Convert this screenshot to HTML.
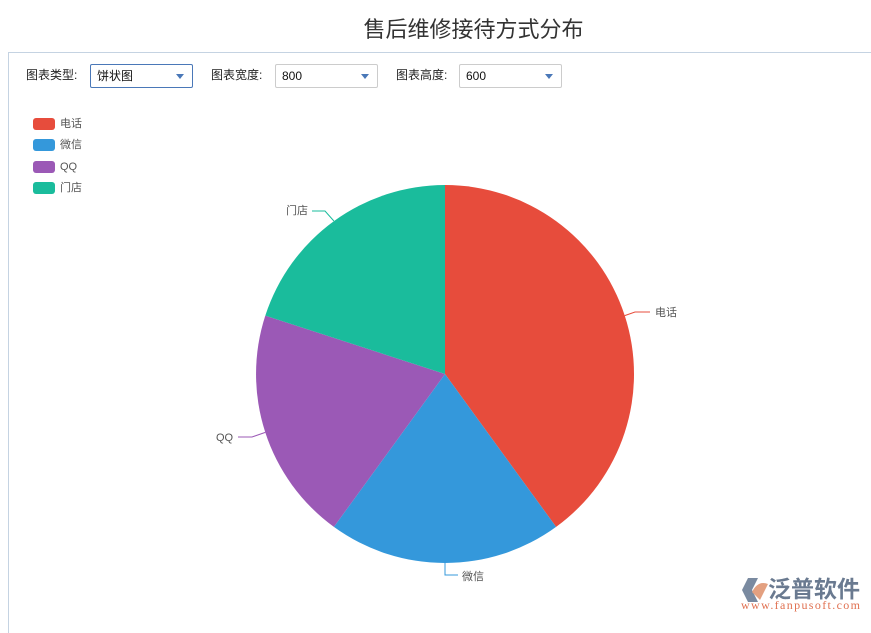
<!DOCTYPE html><html><head><meta charset="utf-8"><style>
body{margin:0;width:871px;height:621px;background:#fff;font-family:"Liberation Sans","Noto Sans CJK SC",sans-serif;position:relative;overflow:hidden}
.t{position:absolute;top:12px;left:0;width:871px;text-align:center;font-size:22px;color:#333;padding-left:76px;box-sizing:border-box}
.panel{position:absolute;left:8px;top:52px;width:870px;height:580px;border-left:1px solid #c5d3e2;border-top:1px solid #c5d3e2}
.lb{position:absolute;top:68px;font-size:12px;color:#222;line-height:14px}
.sel{position:absolute;top:64px;height:24px;border:1px solid #ccc;border-radius:2px;font-size:12px;line-height:22px;padding-left:6px;box-sizing:border-box;color:#111}
.sel:after{content:"";position:absolute;right:8px;top:9px;border:4px solid transparent;border-top:5px solid #4a78b8}
.lg{position:absolute;left:33px;font-size:11px;color:#555;height:14px;line-height:14px}
.lg i{display:inline-block;width:22px;height:12px;border-radius:3px;vertical-align:top;margin-top:1px;margin-right:5px}
</style></head><body>
<div class="t">售后维修接待方式分布</div>
<div class="panel"></div>
<div class="lb" style="left:26px">图表类型:</div>
<div class="sel" style="left:90px;width:103px;border-color:#4a78b8">饼状图</div>
<div class="lb" style="left:211px">图表宽度:</div>
<div class="sel" style="left:275px;width:103px">800</div>
<div class="lb" style="left:396px">图表高度:</div>
<div class="sel" style="left:459px;width:103px">600</div>
<div class="lg" style="top:117px"><i style="background:#e74c3c"></i>电话</div>
<div class="lg" style="top:138px"><i style="background:#3498db"></i>微信</div>
<div class="lg" style="top:160px"><i style="background:#9b59b6"></i>QQ</div>
<div class="lg" style="top:181px"><i style="background:#1abc9c"></i>门店</div>
<svg width="871" height="621" style="position:absolute;left:0;top:0">
<path d="M445 374L445 185A189 189 0 0 1 556.1 526.9Z" fill="#e74c3c"/>
<path d="M445 374L556.1 526.9A189 189 0 0 1 333.9 526.9Z" fill="#3498db"/>
<path d="M445 374L333.9 526.9A189 189 0 0 1 265.3 315.6Z" fill="#9b59b6"/>
<path d="M445 374L265.3 315.6A189 189 0 0 1 445 185Z" fill="#1abc9c"/>
<path d="M624.7 315.6L635 312H650" stroke="#e74c3c" fill="none"/>
<path d="M445 563V575H458" stroke="#3498db" fill="none"/>
<path d="M265.3 432.4L252 437H238" stroke="#9b59b6" fill="none"/>
<path d="M333.9 221L325 211H312" stroke="#1abc9c" fill="none"/>
<g font-size="11" fill="#555" font-family="Liberation Sans,Noto Sans CJK SC,sans-serif">
<text x="655" y="316">电话</text><text x="462" y="580">微信</text>
<text x="216" y="441">QQ</text><text x="286" y="214">门店</text></g>
<path d="M748 578L742 590L748 602H758L752 590L758 578Z" fill="#7a8aa0"/>
<path d="M752 592Q758 580 768 584L760 600Z" fill="#e3a080"/>
<text x="768" y="597" font-size="23" fill="#6a7a90" font-family="Noto Sans CJK SC,sans-serif" font-weight="bold" textLength="92">泛普软件</text>
<text x="741" y="609" font-size="12" fill="#e07050" font-family="Liberation Serif,serif" textLength="119">www.fanpusoft.com</text>
</svg>
</body></html>
